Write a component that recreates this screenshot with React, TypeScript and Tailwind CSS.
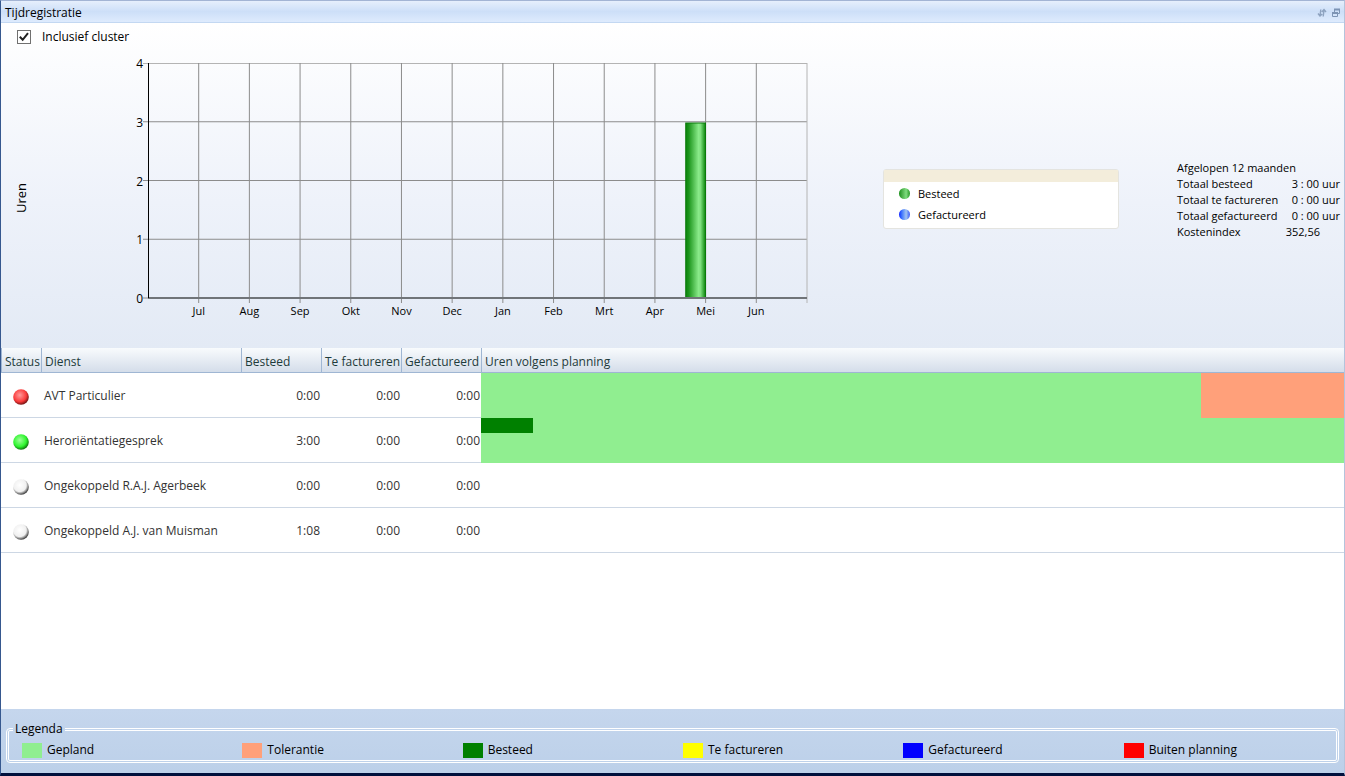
import { useState } from "react";

const months = ["Jul", "Aug", "Sep", "Okt", "Nov", "Dec", "Jan", "Feb", "Mrt", "Apr", "Mei", "Jun"];

const PLOT_HEIGHT = 235;
const MAX_HOURS = 4;

const totals = [
  { label: "Totaal besteed", value: "3 : 00 uur" },
  { label: "Totaal te factureren", value: "0 : 00 uur" },
  { label: "Totaal gefactureerd", value: "0 : 00 uur" },
];

type Status = "red" | "green" | "white";

interface Service {
  status: Status;
  name: string;
  spent: string;
  toInvoice: string;
  invoiced: string;
  planning?: { planned: number; tolerance: number; spent: number };
}

const services: Service[] = [
  {
    status: "red",
    name: "AVT Particulier",
    spent: "0:00",
    toInvoice: "0:00",
    invoiced: "0:00",
    planning: { planned: 83.4, tolerance: 16.6, spent: 0 },
  },
  {
    status: "green",
    name: "Heroriëntatiegesprek",
    spent: "3:00",
    toInvoice: "0:00",
    invoiced: "0:00",
    planning: { planned: 100, tolerance: 0, spent: 6 },
  },
  { status: "white", name: "Ongekoppeld R.A.J. Agerbeek", spent: "0:00", toInvoice: "0:00", invoiced: "0:00" },
  { status: "white", name: "Ongekoppeld A.J. van Muisman", spent: "1:08", toInvoice: "0:00", invoiced: "0:00" },
];

const legend = [
  { label: "Gepland", color: "bg-[#90ee90]" },
  { label: "Tolerantie", color: "bg-[#ffa07a]" },
  { label: "Besteed", color: "bg-[#008000]" },
  { label: "Te factureren", color: "bg-[#ffff00]" },
  { label: "Gefactureerd", color: "bg-[#0000ff]" },
  { label: "Buiten planning", color: "bg-[#ff0000]" },
];

const ballColors: Record<Status, [string, string, string]> = {
  red: ["#ff9a9a", "#fb3b3b", "#6b0f0f"],
  green: ["#a0ff9a", "#2ff52f", "#0a6b0a"],
  white: ["#ffffff", "#f0f0f0", "#2c2c2c"],
};

const StatusBall = ({ status }: { status: Status }) => {
  const [light, base, dark] = ballColors[status];

  return (
    <svg width="16" height="16" viewBox="0 0 16 16" role="img" aria-label={status}>
      <defs>
        <radialGradient id={`ball-${status}`} cx="0.42" cy="0.38" r="0.64">
          <stop offset="0" stopColor={light} />
          <stop offset="0.65" stopColor={base} />
          <stop offset="1" stopColor={dark} />
        </radialGradient>
      </defs>
      <circle cx="8" cy="8" r="7.8" fill={`url(#ball-${status})`} />
    </svg>
  );
};

const TitleBar = () => (
  <header className="flex h-[22px] items-center justify-between border-b border-[#c3d8f2] bg-linear-to-b from-[#e6effc] via-[#cddff8] to-[#deebfd] pt-[2px] pr-[3px] pl-1">
    <h1>Tijdregistratie</h1>
    <div className="flex gap-1">
      <button type="button" aria-label="Vernieuwen">
        <svg width="10" height="10" viewBox="0 0 10 10" fill="none" stroke="#8ea3c0" strokeWidth="1.4">
          <path d="M3.8 1.5L3 8M1 5.5l2 2.5 2.2-2M6.2 8.5L7 2M4.8 4L7 1.5 9 4" />
        </svg>
      </button>
      <button type="button" aria-label="Herstellen">
        <svg width="10" height="10" viewBox="0 0 10 10" fill="none" stroke="#7d94b5">
          <path d="M3.5 4V1.5h5v4H7" />
          <path d="M3 1.5h6M1 5h6" strokeWidth="2" />
          <path d="M1.5 5v3.5h5V5" />
        </svg>
      </button>
    </div>
  </header>
);

const HoursChart = () => {
  const columns = months.length + 1;

  return (
    <svg className="block h-[235px] w-full overflow-visible text-[11px]" role="img" aria-label="Uren per maand">
      <defs>
        <linearGradient id="spent-bar">
          <stop offset="0" stopColor="#0a850a" />
          <stop offset="0.15" stopColor="#1c951c" />
          <stop offset="0.65" stopColor="#8aea8a" />
          <stop offset="0.75" stopColor="#7ddf7d" />
          <stop offset="1" stopColor="#0a850a" />
        </linearGradient>
      </defs>

      {/* Hour lines */}
      {[0, 1, 2, 3, 4].map((hour) => {
        const y = PLOT_HEIGHT - (hour / MAX_HOURS) * PLOT_HEIGHT;
        return (
          <g key={hour}>
            <line
              x1="-5"
              x2="100%"
              y1={y}
              y2={y}
              stroke={hour === MAX_HOURS ? "#b4b4b4" : "#8c8c8c"}
              shapeRendering={hour === MAX_HOURS ? "crispEdges" : "auto"}
            />
            <text x="-5" y={y + 5} textAnchor="end" className="text-[12px]">
              {hour}
            </text>
          </g>
        );
      })}

      {/* Month lines */}
      {months.map((month, index) => {
        const x = `${((index + 1) / columns) * 100}%`;
        return (
          <g key={month}>
            <line x1={x} x2={x} y1="0" y2={PLOT_HEIGHT + 5} stroke="#8c8c8c" />
            <text x={x} y={PLOT_HEIGHT + 17} textAnchor="middle">
              {month}
            </text>
          </g>
        );
      })}
      <line x1="100%" x2="100%" y1="0" y2={PLOT_HEIGHT + 5} stroke="#b4b4b4" />

      <rect x="81.6%" y="60" width="3%" height="175" fill="url(#spent-bar)" stroke="#0b7a0b" />
      <line x1="0" x2="100%" y1={PLOT_HEIGHT} y2={PLOT_HEIGHT} stroke="#707478" strokeWidth="2" />
      <line x1="0" x2="0" y1="0" y2={PLOT_HEIGHT} stroke="#000000" shapeRendering="crispEdges" />
    </svg>
  );
};

const ChartLegend = () => (
  <div className="h-[60px] w-[236px] shrink-0 rounded-[3px] border border-[#e4e4e0] bg-white text-[11px]">
    <div className="h-3 bg-[#f3eddb]" />
    <ul className="flex flex-col gap-[5px] pt-1 pl-[15px]">
      <li className="flex h-4 items-center gap-2">
        <span className="size-[11px] rounded-full bg-linear-to-r from-[#168f16] via-[#7fdc7f] via-65% to-[#1c951c]" />
        Besteed
      </li>
      <li className="flex h-4 items-center gap-2">
        <span className="size-[11px] rounded-full bg-linear-to-r from-[#1a1aff] via-[#a3c2f0] via-65% to-[#3c50f5]" />
        Gefactureerd
      </li>
    </ul>
  </div>
);

const Summary = () => (
  <section className="w-[163px] shrink-0 pt-[2px] text-[11px] leading-4">
    <h2>Afgelopen 12 maanden</h2>
    <dl>
      {totals.map(({ label, value }) => (
        <div key={label} className="flex justify-between whitespace-nowrap">
          <dt>{label}</dt>
          <dd>{value}</dd>
        </div>
      ))}
      <div className="flex justify-between">
        <dt>Kostenindex</dt>
        <dd className="pr-5">352,56</dd>
      </div>
    </dl>
  </section>
);

const PlanningBar = ({ planning }: { planning: NonNullable<Service["planning"]> }) => (
  <div className="flex h-[45px]">
    <div className="bg-[#90ee90]" style={{ width: `${planning.planned}%` }}>
      <div className="h-[15px] bg-[#008000]" style={{ width: `${planning.spent}%` }} />
    </div>
    <div className="bg-[#ffa07a]" style={{ width: `${planning.tolerance}%` }} />
  </div>
);

const ServiceTable = () => {
  const head = "border-b border-l border-[#9fb6d3] px-[3px] pt-[3px] font-normal text-left";
  const cell = "border-b border-[#cdd7e4]";

  return (
    <table className="w-full table-fixed border-separate border-spacing-0 whitespace-nowrap">
      <colgroup>
        <col className="w-10" />
        <col className="w-[200px]" />
        <col className="w-20" />
        <col className="w-20" />
        <col className="w-20" />
        <col />
      </colgroup>
      <thead className="bg-linear-to-b from-[#f8fbfd] to-[#d3dce9] text-[#1e3b3b]">
        <tr className="h-[25px]">
          <th className={head}>Status</th>
          <th className={head}>Dienst</th>
          <th className={head}>Besteed</th>
          <th className={head}>Te factureren</th>
          <th className={head}>Gefactureerd</th>
          <th className={head}>Uren volgens planning</th>
        </tr>
      </thead>
      <tbody className="text-[#333333]">
        {services.map((service) => (
          <tr key={service.name} className="h-[45px]">
            <td className={`${cell} p-0`}>
              <div className="flex justify-center pt-[3px]">
                <StatusBall status={service.status} />
              </div>
            </td>
            <td className={`${cell} pt-[2px] pr-0 pb-0 pl-[3px]`}>{service.name}</td>
            <td className={`${cell} pt-[2px] pr-px pb-0 pl-0 text-right`}>{service.spent}</td>
            <td className={`${cell} pt-[2px] pr-px pb-0 pl-0 text-right`}>{service.toInvoice}</td>
            <td className={`${cell} pt-[2px] pr-px pb-0 pl-0 text-right`}>{service.invoiced}</td>
            {service.planning ? (
              <td className="p-0">
                <PlanningBar planning={service.planning} />
              </td>
            ) : (
              <td className={cell} />
            )}
          </tr>
        ))}
      </tbody>
    </table>
  );
};

const App = () => {
  const [includeCluster, setIncludeCluster] = useState(true);

  return (
    <div className="flex min-h-screen flex-col border-t border-b-3 border-l border-t-[#a3b4d4] border-r border-r-[#b4c4dc] border-b-[#00103c] border-l-[#36588f] bg-white font-['Open_Sans','Noto_Sans',sans-serif] text-[12px] leading-4 text-black">
      <TitleBar />

      <main className="flex flex-1 flex-col">
        <div className="bg-linear-to-b from-white via-[#eef2fa] via-55% to-[#e3eaf5]">
          <label className="flex h-7 items-center gap-[11px] pl-4">
            <input
              type="checkbox"
              checked={includeCluster}
              onChange={(event) => setIncludeCluster(event.target.checked)}
              className="peer sr-only"
            />
            <span className="flex size-[14px] items-center justify-center border border-[#707070] bg-white peer-focus-visible:outline">
              {includeCluster && (
                <svg width="12" height="12" viewBox="0 0 12 12" fill="none" stroke="#212121" strokeWidth="2">
                  <path d="M1.8 5.8l2.9 3L10 2.2" />
                </svg>
              )}
            </span>
            Inclusief cluster
          </label>

          <div className="flex pt-3 pr-1 pb-[50px]">
            <div className="flex w-10 items-center justify-center pt-9">
              <span className="rotate-180 text-[13px] [writing-mode:vertical-rl]">Uren</span>
            </div>
            <div className="ml-[107px] min-w-0 flex-1">
              <HoursChart />
            </div>
            <div className="ml-[76px] flex items-center gap-[58px] pt-9">
              <ChartLegend />
              <Summary />
            </div>
          </div>
        </div>

        <ServiceTable />
      </main>

      <footer className="bg-linear-to-b from-[#c5d6ed] to-[#bcd0e9] px-[5px] pt-3 pb-[10px]">
        <fieldset className="rounded-[4px] border-3 border-double border-white pb-[2px]">
          <legend className="ml-1 px-[2px]">Legenda</legend>
          <ul className="-mr-2 grid grid-cols-6 pt-[5px] pl-[13px]">
            {legend.map(({ label, color }) => (
              <li key={label} className="flex items-center gap-[5px]">
                <span className={`h-[15px] w-5 ${color}`} />
                {label}
              </li>
            ))}
          </ul>
        </fieldset>
      </footer>
    </div>
  );
};

export default App;
